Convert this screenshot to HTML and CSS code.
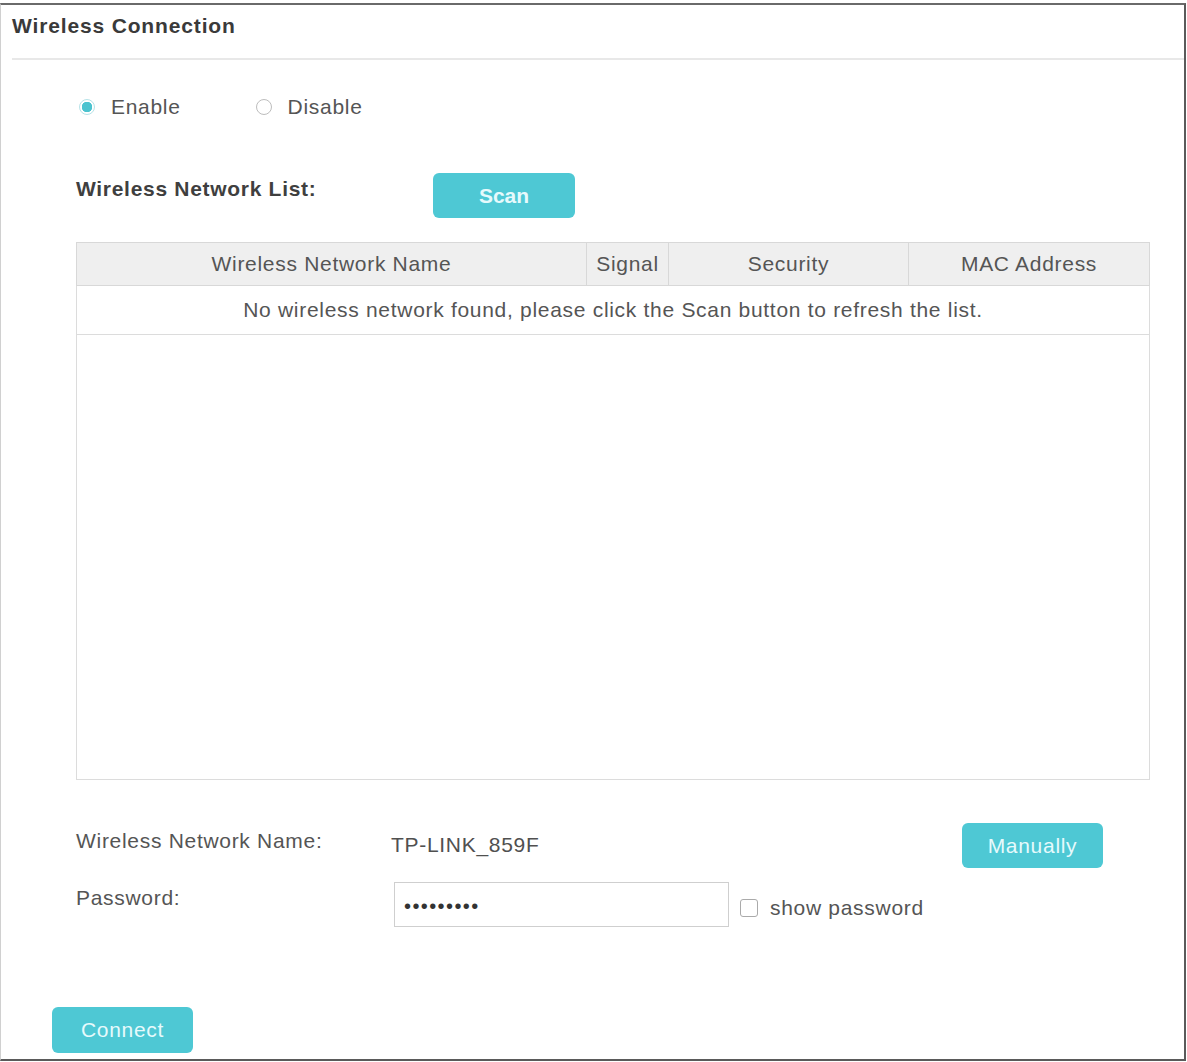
FILE: index.html
```html
<!DOCTYPE html>
<html lang="en">
<head>
<meta charset="utf-8">
<title>Wireless Connection</title>
<link rel="stylesheet" href="styles.css">
</head>
<body>
<div class="frame">
  <div class="header"><h1 class="title">Wireless Connection</h1></div>
  <div class="content">
    <div class="radios">
      <label class="radio"><span class="dot checked"></span><span>Enable</span></label>
      <label class="radio"><span class="dot"></span><span>Disable</span></label>
    </div>
    <div class="list-row">
      <span class="list-label">Wireless Network List:</span>
      <button class="btn scan">Scan</button>
    </div>
    <div class="table-wrap">
      <table class="net-table">
        <colgroup>
          <col class="c1"><col class="c2"><col class="c3"><col class="c4">
        </colgroup>
        <thead>
          <tr><th>Wireless Network Name</th><th>Signal</th><th>Security</th><th>MAC Address</th></tr>
        </thead>
        <tbody>
          <tr class="empty-msg"><td colspan="4">No wireless network found, please click the Scan button to refresh the list.</td></tr>
          <tr class="filler"><td colspan="4"></td></tr>
        </tbody>
      </table>
    </div>
    <div class="form">
      <div class="form-row row1">
        <span class="f-label l1">Wireless Network Name:</span>
        <span class="f-value">TP-LINK_859F</span>
        <button class="btn manual">Manually</button>
      </div>
      <div class="form-row row2">
        <span class="f-label l2">Password:</span>
        <div class="pw-input"><span class="pw-dots">&#8226;&#8226;&#8226;&#8226;&#8226;&#8226;&#8226;&#8226;&#8226;</span></div>
        <span class="checkbox"></span>
        <span class="show-pw">show password</span>
      </div>
    </div>
  </div>
  <div class="footer">
    <button class="btn connect">Connect</button>
  </div>
</div>
</body>
</html>
```
FILE: styles.css
```css
* { box-sizing: border-box; }
html, body { margin: 0; padding: 0; background: #fff; }
body {
  padding-top: 3px;
  font-family: "Liberation Sans", Arial, sans-serif;
  font-size: 21px;
  letter-spacing: 0.7px;
  color: #555;
}
.frame {
  width: 1186px;
  height: 1058px;
  border-top: 2px solid #6a6a6a;
  border-right: 2px solid #5a5a5a;
  border-bottom: 2px solid #5a5a5a;
  border-left: 1px solid #d0d0d0;
  display: flex;
  flex-direction: column;
}
.header {
  margin-left: 11px;
  height: 55px;
  border-bottom: 2px solid #e8e8e8;
}
.title {
  margin: 0;
  padding-top: 9px;
  font-size: 21px;
  letter-spacing: 0.85px;
  line-height: 24px;
  font-weight: bold;
  color: #3a3a3a;
}
.content {
  padding-left: 75px;
  width: 1148px;
}
.radios {
  margin-top: 35px;
  display: flex;
  align-items: center;
  height: 24px;
  line-height: 24px;
  padding-left: 3px;
}
.radio { display: flex; align-items: center; gap: 16px; }
.radio + .radio { margin-left: 75px; }
.dot {
  width: 16px; height: 16px;
  border-radius: 50%;
  border: 1.5px solid #bdbdbd;
  background: #fff;
  display: inline-block;
}
.dot.checked {
  border: 1.5px solid #b7e3e8;
  background: radial-gradient(circle, #4cc3cf 0, #4cc3cf 5px, #fff 5.5px);
}
.list-row {
  margin-top: 54px;
  display: flex;
  align-items: flex-start;
}
.list-label {
  width: 357px;
  padding-top: 4px;
  line-height: 24px;
  font-weight: bold;
  color: #3f3f3f;
}
.btn {
  font-family: "Liberation Sans", Arial, sans-serif;
  font-size: 21px;
  letter-spacing: 0.7px;
  border: none;
  border-radius: 6px;
  background: #4ec8d4;
  color: #e6fafc;
  width: 142px;
  height: 45px;
  padding: 0;
  line-height: 45px;
  text-align: center;
}
.scan { font-weight: bold; letter-spacing: 0; }
.table-wrap { margin-top: 24px; width: 1073px; }
.net-table {
  width: 1073px;
  border-collapse: collapse;
  table-layout: fixed;
  border: 1px solid #dcdcdc;
}
.c1 { width: 510px; }
.c2 { width: 82px; }
.c3 { width: 240px; }
.c4 { width: 241px; }
.net-table th {
  background: #efefef;
  font-weight: normal;
  height: 43px;
  padding: 0;
  border: 1px solid #d8d8d8;
  color: #555;
  text-align: center;
}
.net-table td { padding: 0; text-align: center; }
.empty-msg td { height: 49px; border-bottom: 1px solid #dcdcdc; }
.filler td { height: 445px; }
.form { margin-top: 43px; width: 1073px; }
.form-row { display: flex; align-items: flex-start; }
.row1 { height: 45px; }
.row2 { margin-top: 14px; height: 45px; }
.f-label { line-height: 24px; }
.l1 { width: 315px; padding-top: 6px; }
.l2 { width: 318px; padding-top: 4px; }
.f-value { padding-top: 10px; line-height: 24px; color: #505050; }
.manual { margin-left: auto; margin-right: 46px; width: 141px; }
.pw-input {
  width: 335px;
  height: 45px;
  border: 1px solid #cfcfcf;
  padding-left: 9px;
  display: flex;
  align-items: center;
  padding-top: 4px;
}
.pw-dots { color: #333; font-size: 20px; letter-spacing: 1.4px; }
.checkbox {
  margin-left: 11px;
  margin-top: 17px;
  width: 18px; height: 18px;
  border: 1.5px solid #aaa;
  border-radius: 3px;
}
.show-pw { margin-left: 12px; padding-top: 14px; line-height: 24px; }
.footer {
  margin-top: 80px;
  padding-left: 51px;
}
.connect { width: 141px; height: 46px; line-height: 46px; }
```
